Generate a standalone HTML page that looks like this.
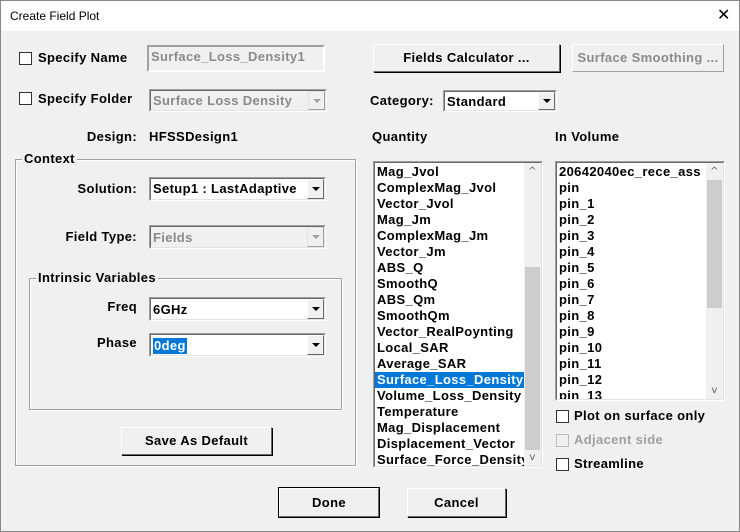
<!DOCTYPE html>
<html><head><style>
*{box-sizing:border-box;margin:0;padding:0}
body{width:740px;height:532px;position:relative;background:#f0f0f0;font:bold 13px "Liberation Sans",sans-serif;letter-spacing:0.35px;color:#000;overflow:hidden}
.a{position:absolute}
.t{position:absolute;height:16px;line-height:16px;white-space:nowrap}
.r{text-align:right}
.g{color:#8a8a8a}
.cb{position:absolute;width:13px;height:13px;background:#fff;border:1px solid #333}
.cb.d{border-color:#bcbcbc;background:#f0f0f0}
.sunk{position:absolute;border:1px solid;border-color:#a0a0a0 #fff #fff #a0a0a0;}
.sunk>.in{position:absolute;left:0;top:0;right:0;bottom:0;border:1px solid;border-color:#696969 #e3e3e3 #e3e3e3 #696969;background:#fff;overflow:hidden}
.dis>.in{background:#f0f0f0}
.dd{position:absolute;right:0;top:0;bottom:0;width:17px;background:#f0f0f0;border:1px solid;border-color:#fff #696969 #696969 #fff}
.dd:after{content:"";position:absolute;left:4px;top:50%;margin-top:-2px;border-left:4px solid transparent;border-right:4px solid transparent;border-top:4px solid #000}
.dis .dd:after{border-top-color:#a0a0a0}
.btn{position:absolute;border:1px solid;border-color:#fff #696969 #696969 #fff;box-shadow:1px 1px 0 #000;text-align:center;background:#f0f0f0}
.grp{position:absolute;border:1px solid #a0a0a0;box-shadow:inset 1px 1px 0 #fff,1px 1px 0 #fff}
.gl{position:absolute;background:#f0f0f0;padding:0 2px;height:16px;line-height:16px;top:-9px}
.list .it{height:16px;line-height:16px;padding-left:2px;white-space:nowrap}
.sb{position:absolute;right:0;top:0;bottom:0;width:17px;background:#f0f0f0}
.sb .th{position:absolute;left:1px;right:1px;background:#cdcdcd}
.sb .ar{position:absolute;left:0;width:17px;height:17px;text-align:center;font:normal 10px "DejaVu Sans",sans-serif;line-height:17px;color:#606060}
</style></head><body>
<div class="a" style="left:0;top:0;width:740px;height:532px;border:1px solid #888;"></div>
<div class="a" style="left:1px;top:1px;width:738px;height:30px;background:#fff"></div>
<div class="t" style="left:10px;top:8px;font:normal 12px 'Liberation Sans',sans-serif;letter-spacing:0;line-height:16px">Create Field Plot</div>
<div class="t" style="left:717px;top:5px;font:normal 16px 'DejaVu Sans',sans-serif;line-height:20px">✕</div>

<div class="cb" style="left:19px;top:52px"></div><div class="t" style="left:38px;top:50px">Specify Name</div>
<div class="sunk dis" style="left:147px;top:45px;width:178px;height:27px"><div class="in" style="border-color:#a0a0a0 #fff #fff #a0a0a0"><div class="t g" style="left:2px;top:2px">Surface_Loss_Density1</div></div></div>

<div class="cb" style="left:19px;top:92px"></div><div class="t" style="left:38px;top:91px">Specify Folder</div>
<div class="sunk dis" style="left:149px;top:89px;width:178px;height:23px"><div class="in"><div class="t g" style="left:2px;top:2px">Surface Loss Density</div><div class="dd" style="border-color:#e3e3e3 #a0a0a0 #a0a0a0 #e3e3e3"></div></div></div>

<div class="t r" style="left:40px;width:97px;top:129px">Design:</div>
<div class="t" style="left:149px;top:129px">HFSSDesign1</div>

<div class="grp" style="left:15px;top:159px;width:341px;height:307px"><div class="gl" style="left:6px">Context</div></div>
<div class="t r" style="left:40px;width:97px;top:181px">Solution:</div>
<div class="sunk" style="left:149px;top:177px;width:177px;height:24px"><div class="in"><div class="t" style="left:2px;top:2px">Setup1 : LastAdaptive</div><div class="dd"></div></div></div>
<div class="t r" style="left:40px;width:97px;top:229px">Field Type:</div>
<div class="sunk dis" style="left:149px;top:225px;width:177px;height:24px"><div class="in"><div class="t g" style="left:2px;top:3px">Fields</div><div class="dd" style="border-color:#e3e3e3 #a0a0a0 #a0a0a0 #e3e3e3"></div></div></div>

<div class="grp" style="left:29px;top:278px;width:313px;height:132px"><div class="gl" style="left:6px">Intrinsic Variables</div></div>
<div class="t r" style="left:40px;width:97px;top:299px">Freq</div>
<div class="sunk" style="left:149px;top:297px;width:177px;height:24px"><div class="in"><div class="t" style="left:2px;top:3px">6GHz</div><div class="dd"></div></div></div>
<div class="t r" style="left:40px;width:97px;top:335px">Phase</div>
<div class="sunk" style="left:149px;top:333px;width:177px;height:24px"><div class="in"><div class="t" style="left:2px;top:3px;background:#0078d7;color:#fff;padding:0 1px">0deg</div><div class="dd"></div></div></div>
<div class="btn" style="left:121px;top:427px;width:151px;height:28px;line-height:26px">Save As Default</div>

<div class="btn" style="left:373px;top:44px;width:187px;height:28px;line-height:26px">Fields Calculator ...</div>
<div class="btn g" style="left:572px;top:44px;width:152px;height:28px;line-height:26px;box-shadow:none;border-color:#fff #a0a0a0 #a0a0a0 #fff">Surface Smoothing ...</div>

<div class="t" style="left:370px;top:93px">Category:</div>
<div class="sunk" style="left:443px;top:90px;width:114px;height:22px"><div class="in"><div class="t" style="left:2px;top:2px">Standard</div><div class="dd"></div></div></div>

<div class="t" style="left:372px;top:129px">Quantity</div>
<div class="t" style="left:555px;top:129px">In Volume</div>

<div class="sunk list" style="left:373px;top:161px;width:170px;height:307px"><div class="in" style="padding-top:1px">
<div class="it">Mag_Jvol</div><div class="it">ComplexMag_Jvol</div><div class="it">Vector_Jvol</div><div class="it">Mag_Jm</div><div class="it">ComplexMag_Jm</div><div class="it">Vector_Jm</div><div class="it">ABS_Q</div><div class="it">SmoothQ</div><div class="it">ABS_Qm</div><div class="it">SmoothQm</div><div class="it">Vector_RealPoynting</div><div class="it">Local_SAR</div><div class="it">Average_SAR</div><div class="it" style="background:#0078d7;color:#fff;margin-right:17px">Surface_Loss_Density</div><div class="it">Volume_Loss_Density</div><div class="it">Temperature</div><div class="it">Mag_Displacement</div><div class="it">Displacement_Vector</div><div class="it">Surface_Force_Density</div>
<div class="sb"><div class="ar" style="top:0">^</div><div class="th" style="top:104px;height:183px"></div><div class="ar" style="bottom:0">v</div></div>
</div></div>

<div class="sunk list" style="left:555px;top:161px;width:170px;height:240px"><div class="in" style="padding-top:1px">
<div class="it">20642040ec_rece_ass</div><div class="it">pin</div><div class="it">pin_1</div><div class="it">pin_2</div><div class="it">pin_3</div><div class="it">pin_4</div><div class="it">pin_5</div><div class="it">pin_6</div><div class="it">pin_7</div><div class="it">pin_8</div><div class="it">pin_9</div><div class="it">pin_10</div><div class="it">pin_11</div><div class="it">pin_12</div><div class="it">pin_13</div>
<div class="sb"><div class="ar" style="top:0">^</div><div class="th" style="top:17px;height:128px"></div><div class="ar" style="bottom:0">v</div></div>
</div></div>

<div class="cb" style="left:556px;top:410px"></div><div class="t" style="left:574px;top:408px">Plot on surface only</div>
<div class="cb d" style="left:556px;top:434px"></div><div class="t g" style="left:574px;top:432px;color:#a0a0a0">Adjacent side</div>
<div class="cb" style="left:556px;top:458px"></div><div class="t" style="left:574px;top:456px">Streamline</div>

<div class="btn" style="left:279px;top:488px;width:100px;height:29px;line-height:27px;outline:1px solid #000">Done</div>
<div class="btn" style="left:407px;top:488px;width:99px;height:29px;line-height:27px">Cancel</div>
</body></html>
